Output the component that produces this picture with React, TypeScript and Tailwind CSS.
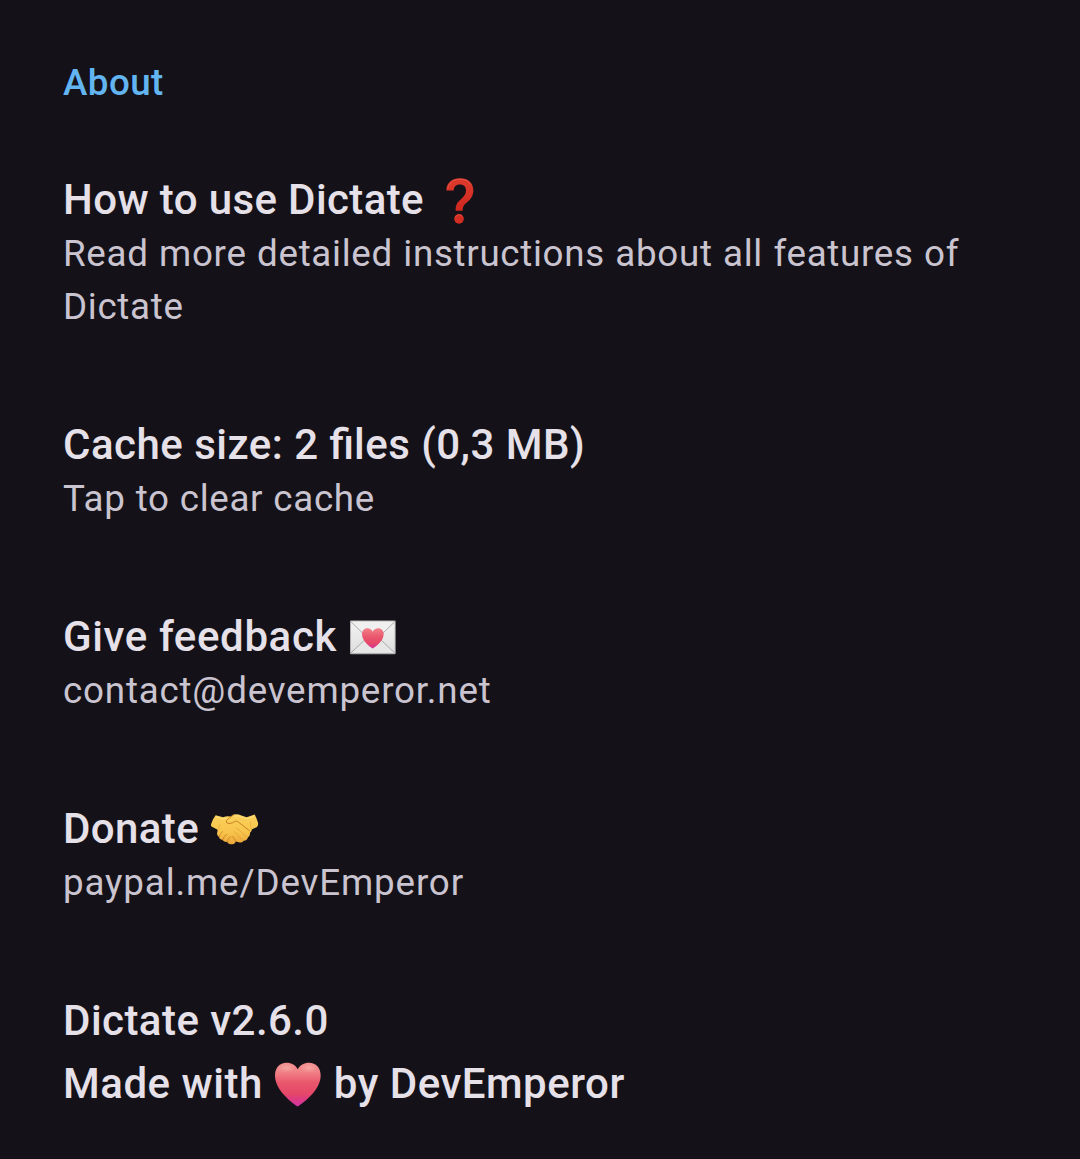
import type { ReactNode } from "react";

function QuestionEmoji() {
  return (
    <svg className="-ml-px block h-[52px] w-[52px] shrink-0" viewBox="12 25.5 156 156" role="img" aria-label="question mark">
      <defs>
        <linearGradient id="q-red" x1="0" y1="0" x2="0" y2="1">
          <stop offset="0" stopColor="#dd3a2d" />
          <stop offset="1" stopColor="#cf281f" />
        </linearGradient>
      </defs>
      <path
        d="M49 75C49 51 67 38 90 38C114 38 130 52 130 74C130 92 121 102 110 111C101 119 98 124 98 136H77C77 118 81 111 93 101C103 92 108 86 108 75C108 64 101 57 90 57C78 57 72 63 71 75Z"
        fill="url(#q-red)"
      />
      <path d="M53 71C55 51 70 41 90 41C105 41 117 47 123 57" fill="none" stroke="#ee6858" strokeWidth="2.5" opacity=".6" />
      <circle cx="87" cy="160" r="14.5" fill="#d42d23" />
      <path d="M76 156C79 148 91 145 97 152" fill="none" stroke="#ee6858" strokeWidth="2.5" opacity=".6" />
    </svg>
  );
}

function LoveLetterEmoji() {
  return (
    <svg className="-ml-px mt-px block h-[52px] w-[52px] shrink-0" viewBox="21 1.5 156 156" role="img" aria-label="love letter">
      <defs>
        <linearGradient id="env-paper" x1="0" y1="0" x2="0" y2="1">
          <stop offset="0" stopColor="#f2f2f2" />
          <stop offset="1" stopColor="#dedede" />
        </linearGradient>
        <linearGradient id="env-heart" x1="0" y1="0" x2="0" y2="1">
          <stop offset="0" stopColor="#f2828a" />
          <stop offset=".45" stopColor="#e9556c" />
          <stop offset=".75" stopColor="#e5486a" />
          <stop offset="1" stopColor="#d633a0" />
        </linearGradient>
      </defs>
      <rect x="30" y="30" width="137" height="101" rx="3" fill="#b0b0b0" />
      <rect x="33" y="33" width="131" height="94" rx="2" fill="url(#env-paper)" />
      <path d="M33 127L82 81H115L164 127Z" fill="#e7e7e7" />
      <path d="M33 127L82 81M164 127L115 81" stroke="#a9a9a9" strokeWidth="3" />
      <path d="M33 34L89 88Q98 96 108 88L164 34" fill="#f0f0f0" stroke="#adadad" strokeWidth="3" />
      <path
        d="M98 114C91 110 66 92 66 71C66 60 73 53 82 53C90 53 95 57 98 64C101 57 107 53 115 53C124 53 131 60 131 71C131 92 105 110 98 114Z"
        fill="url(#env-heart)"
      />
    </svg>
  );
}

function HandshakeEmoji() {
  return (
    <svg className="-ml-px mt-px block h-[52px] w-[52px] shrink-0" viewBox="27 7.5 156 156" role="img" aria-label="handshake">
      <defs>
        <linearGradient id="hand-skin" x1="0" y1="0" x2="0" y2="1">
          <stop offset="0" stopColor="#fbd05c" />
          <stop offset=".6" stopColor="#f8c54c" />
          <stop offset="1" stopColor="#eba63a" />
        </linearGradient>
      </defs>
      <path
        d="M47 44L69 50Q80 46 92 48L101 42Q113 39 124 45L140 50L164 42Q169 51 174 66Q176 75 170 80L156 86Q155 92 150 97Q151 105 144 110Q142 119 131 121Q127 129 116 125L108 123Q104 132 94 131Q85 133 81 124Q72 126 67 118Q58 117 57 109Q49 105 52 95L53 88L36 79Q31 77 34 69Q38 55 47 44Z"
        fill="url(#hand-skin)"
      />
      <path
        d="M101 43Q87 51 79 61Q77 69 87 69Q98 69 106 62L113 63L149 91"
        fill="none"
        stroke="#c98225"
        strokeWidth="3"
        strokeLinecap="round"
        strokeLinejoin="round"
      />
      <path
        d="M109 82L140 108M101 92L127 117"
        fill="none"
        stroke="#dc9c35"
        strokeWidth="2"
        strokeLinecap="round"
      />
      <path
        d="M57 109Q60 98 68 93M68 118Q70 107 80 101M82 124Q83 114 92 108M98 108Q104 115 107 123"
        fill="none"
        stroke="#c98225"
        strokeWidth="2.5"
        strokeLinecap="round"
      />
      <path d="M103 47Q114 43 123 49L140 55L161 48" fill="none" stroke="#ffe083" strokeWidth="3" strokeLinecap="round" />
      <path d="M49 49L69 55L80 53" fill="none" stroke="#ffe083" strokeWidth="3" strokeLinecap="round" />
      <path d="M155 86Q149 77 152 64" fill="none" stroke="#e6a63a" strokeWidth="2" />
      <path d="M53 88Q59 80 59 70" fill="none" stroke="#e6a63a" strokeWidth="2" />
    </svg>
  );
}

function HeartEmoji() {
  return (
    <svg className="-ml-[2px] -mr-px mt-px block h-[52px] w-[52px] shrink-0" viewBox="21 22.5 156 156" role="img" aria-label="heart">
      <defs>
        <linearGradient id="heart-fill" x1="0" y1="0" x2="0" y2="1">
          <stop offset="0" stopColor="#f28c8c" />
          <stop offset=".2" stopColor="#f08388" />
          <stop offset=".45" stopColor="#e9576c" />
          <stop offset=".7" stopColor="#e54867" />
          <stop offset=".86" stopColor="#dc3a86" />
          <stop offset="1" stopColor="#d233a8" />
        </linearGradient>
        <radialGradient id="heart-shine">
          <stop offset="0" stopColor="#f9b3ab" stopOpacity=".7" />
          <stop offset="1" stopColor="#f9b3ab" stopOpacity="0" />
        </radialGradient>
      </defs>
      <path
        d="M98 168C88 162 30 122 30 75C30 52 44 37 64 37C80 37 92 44 98 56C105 44 117 37 132 37C153 37 167 52 167 75C167 122 108 162 98 168Z"
        fill="url(#heart-fill)"
      />
      <ellipse cx="64" cy="52" rx="27" ry="14" fill="url(#heart-shine)" />
      <ellipse cx="132" cy="52" rx="27" ry="14" fill="url(#heart-shine)" />
    </svg>
  );
}

function Title({ tracking, children }: { tracking: string; children: ReactNode }) {
  return (
    <h2 className={`flex h-[55px] items-center whitespace-pre text-[42px] font-medium leading-[55px] text-[#e6e0e9] ${tracking}`}>
      {children}
    </h2>
  );
}

type ItemProps = {
  title: ReactNode;
  titleTracking: string;
  detail: string;
  detailSpacing: string;
};

function Item({ title, titleTracking, detail, detailSpacing }: ItemProps) {
  return (
    <div>
      <Title tracking={titleTracking}>{title}</Title>
      <p className={`mt-px text-[36.75px] leading-[52.5px] text-[#cac4d0] ${detailSpacing}`}>{detail}</p>
    </div>
  );
}

export default function App() {
  return (
    <main className="min-h-[1159px] bg-[#141218] px-[63px] pt-[56px] font-[Roboto,sans-serif]">
      <h1 className="h-[53px] text-[36.75px] font-medium leading-[53px] tracking-[0.45px] text-[#63b5f2]">About</h1>
      <section className="mt-[63px] flex flex-col gap-[83.5px]">
        <Item
          title={<>How to use Dictate <QuestionEmoji /></>}
          titleTracking="tracking-[0.38px]"
          detail="Read more detailed instructions about all features of Dictate"
          detailSpacing="tracking-[0.68px] [word-spacing:0.7px]"
        />
        <Item
          title={
            <span>
              Cache size: 2 <span className="tracking-normal">fi</span>les (0,3 MB)
            </span>
          }
          titleTracking="tracking-[0.48px]"
          detail="Tap to clear cache"
          detailSpacing="tracking-[0.68px] [word-spacing:0.3px]"
        />
        <Item
          title={<>Give feedback <LoveLetterEmoji /></>}
          titleTracking="tracking-[0.62px]"
          detail="contact@devemperor.net"
          detailSpacing="tracking-[0.8px]"
        />
        <Item
          title={<>Donate <HandshakeEmoji /></>}
          titleTracking="tracking-[0.38px]"
          detail="paypal.me/DevEmperor"
          detailSpacing="tracking-[0.86px]"
        />
        <div className="flex flex-col gap-2">
          <Title tracking="tracking-[0.46px]">Dictate v2.6.0</Title>
          <Title tracking="tracking-[0.52px]">Made with <HeartEmoji /> by DevEmperor</Title>
        </div>
      </section>
    </main>
  );
}
